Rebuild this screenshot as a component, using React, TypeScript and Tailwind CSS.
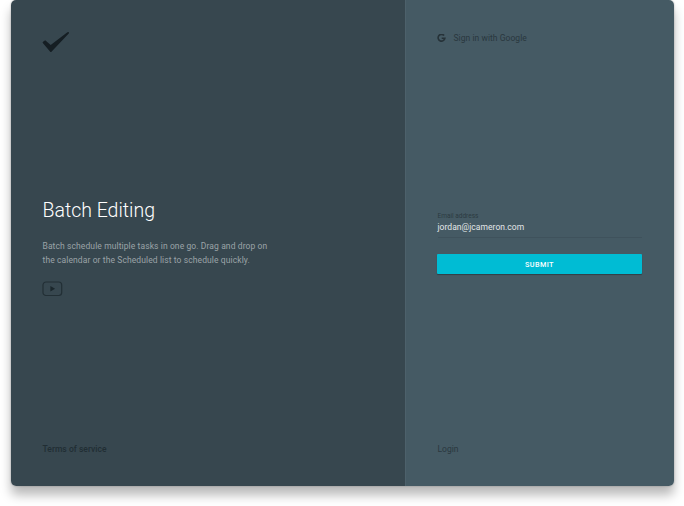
function CheckLogo() {
  return (
    <svg className="block h-[22px] w-7" viewBox="0 0 28 22" fill="#151e23">
      <path d="M.7 11 3.200 9.200 8.700 13.900 25.400 1.300Q26.500.7 27 1.400 27.200 2 26.500 2.700L9.700 20.500Q8.800 21.500 8 20.500L1 12.300Q.4 11.600.7 11Z" />
    </svg>
  );
}

function PlayIcon() {
  return (
    <svg className="block h-4 w-[21px]" viewBox="0 0 21 16">
      <rect x="1" y="1" width="18.700" height="13.500" rx="3" fill="none" stroke="#222f35" strokeWidth="1.200" />
      <path d="M8.400 5v5.400l4.700-2.700Z" fill="#1b272c" />
    </svg>
  );
}

function GoogleIcon() {
  return (
    <svg className="-ml-[0.5px] block h-[9px] w-[9px]" viewBox="0 0 9 9" fill="none" stroke="#263238" strokeWidth="1.600">
      <path d="M7.100 1.500A3.400 3.400 0 1 0 7.900 4.200H4.700" />
    </svg>
  );
}

export default function App() {
  return (
    <main className="h-[506px] w-[684px] overflow-hidden bg-white pl-[11px] font-['Roboto',sans-serif]">
      <div className="flex h-[486px] w-[663px] overflow-hidden rounded-[5px] shadow-[0_9px_11px_rgba(0,0,0,0.28),0_0_2px_rgba(0,0,0,0.3)]">
        <section className="flex w-[394px] flex-col bg-[#37474f] pl-[31px]">
          <div className="mt-[31px]">
            <CheckLogo />
          </div>
          <h1 className="mt-[146px] ml-[0.5px] h-6 text-[19.5px] leading-6 font-light whitespace-nowrap text-white">
            Batch Editing
          </h1>
          <p className="mt-4 ml-[0.5px] h-7 text-[8.5px] leading-[14px] tracking-[0.1px] whitespace-nowrap text-[#9ba3a7]">
            Batch schedule multiple tasks in one go. Drag and drop on
            <br />
            the calendar or the Scheduled list to schedule quickly.
          </p>
          <div className="mt-[14px]">
            <PlayIcon />
          </div>
          <a className="mt-auto mb-[31px] ml-[0.5px] h-3 text-[8.5px] leading-3 font-medium tracking-[0.03px] text-[#212e34]">
            Terms of service
          </a>
        </section>
        <section className="flex flex-1 flex-col border-l border-[#4d616b] bg-[#455a64] pr-8 pl-[31.5px]">
          <a className="mt-8 flex h-3 items-center gap-[7.5px] text-[8.5px] leading-3 tracking-[0.05px] text-[#2a383f]">
            <GoogleIcon />
            Sign in with Google
          </a>
          <label className="mt-[168px] h-2 text-[6.5px] leading-2 text-[#2c3b42]">Email address</label>
          <div className="h-[18px] border-b border-[#3f525c] pt-px text-[8.5px] leading-3 tracking-[0.05px] text-[#e3e7e8]">
            jordan@jcameron.com
          </div>
          <button className="mt-4 -ml-[0.5px] h-5 rounded-[1px] bg-[#00bcd4] pt-[3px] pb-px text-[7.25px] leading-4 font-medium tracking-[0.4px] text-white shadow-[0_1px_1px_rgba(0,0,0,0.3)]">
            SUBMIT
          </button>
          <a className="mt-auto mb-[31px] h-3 text-[8.5px] leading-3 text-[#2a383f]">Login</a>
        </section>
      </div>
    </main>
  );
}
